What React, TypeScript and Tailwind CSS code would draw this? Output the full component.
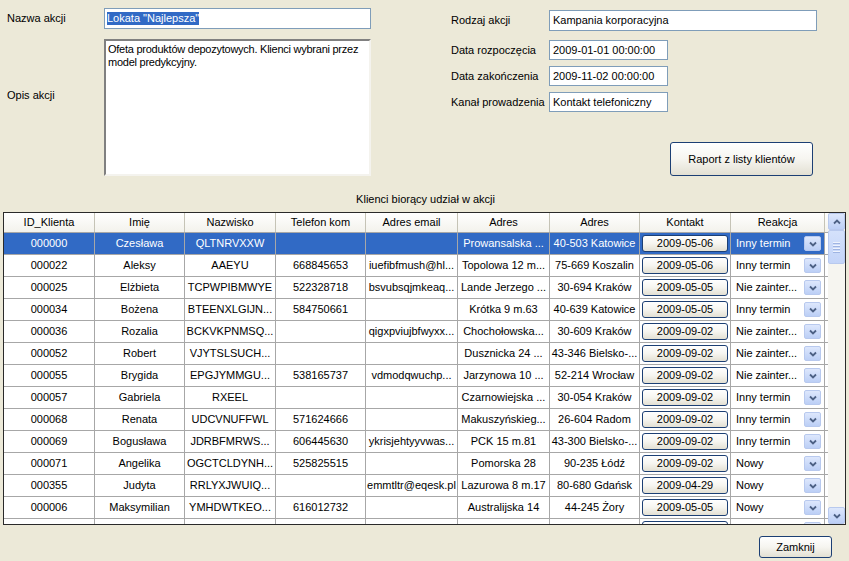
import React from "react";

type Row = {
  id: string;
  imie: string;
  nazwisko: string;
  tel: string;
  email: string;
  adres: string;
  miasto: string;
  kontakt: string;
  reakcja: string;
};

const rows: Row[] = [
  { id: "000000", imie: "Czesława", nazwisko: "QLTNRVXXW", tel: "", email: "", adres: "Prowansalska ...", miasto: "40-503 Katowice", kontakt: "2009-05-06", reakcja: "Inny termin" },
  { id: "000022", imie: "Aleksy", nazwisko: "AAEYU", tel: "668845653", email: "iuefibfmush@hl...", adres: "Topolowa 12 m...", miasto: "75-669 Koszalin", kontakt: "2009-05-06", reakcja: "Inny termin" },
  { id: "000025", imie: "Elżbieta", nazwisko: "TCPWPIBMWYE", tel: "522328718", email: "bsvubsqjmkeaq...", adres: "Lande Jerzego ...", miasto: "30-694 Kraków", kontakt: "2009-05-05", reakcja: "Nie zainter..." },
  { id: "000034", imie: "Bożena", nazwisko: "BTEENXLGIJN...", tel: "584750661", email: "", adres: "Krótka 9 m.63", miasto: "40-639 Katowice", kontakt: "2009-05-05", reakcja: "Inny termin" },
  { id: "000036", imie: "Rozalia", nazwisko: "BCKVKPNMSQ...", tel: "", email: "qigxpviujbfwyxx...", adres: "Chochołowska...", miasto: "30-609 Kraków", kontakt: "2009-09-02", reakcja: "Nie zainter..." },
  { id: "000052", imie: "Robert", nazwisko: "VJYTSLSUCH...", tel: "", email: "", adres: "Dusznicka 24 ...", miasto: "43-346 Bielsko-...", kontakt: "2009-09-02", reakcja: "Nie zainter..." },
  { id: "000055", imie: "Brygida", nazwisko: "EPGJYMMGU...", tel: "538165737", email: "vdmodqwuchp...", adres: "Jarzynowa 10 ...", miasto: "52-214 Wrocław", kontakt: "2009-09-02", reakcja: "Nie zainter..." },
  { id: "000057", imie: "Gabriela", nazwisko: "RXEEL", tel: "", email: "", adres: "Czarnowiejska ...", miasto: "30-054 Kraków", kontakt: "2009-09-02", reakcja: "Inny termin" },
  { id: "000068", imie: "Renata", nazwisko: "UDCVNUFFWL", tel: "571624666", email: "", adres: "Makuszyńskieg...", miasto: "26-604 Radom", kontakt: "2009-09-02", reakcja: "Inny termin" },
  { id: "000069", imie: "Bogusława", nazwisko: "JDRBFMRWS...", tel: "606445630", email: "ykrisjehtyyvwas...", adres: "PCK 15 m.81", miasto: "43-300 Bielsko-...", kontakt: "2009-09-02", reakcja: "Inny termin" },
  { id: "000071", imie: "Angelika", nazwisko: "OGCTCLDYNH...", tel: "525825515", email: "", adres: "Pomorska  28", miasto: "90-235 Łódź", kontakt: "2009-09-02", reakcja: "Nowy" },
  { id: "000355", imie: "Judyta", nazwisko: "RRLYXJWUIQ...", tel: "", email: "emmtltr@eqesk.pl", adres: "Lazurowa 8 m.17", miasto: "80-680 Gdańsk", kontakt: "2009-04-29", reakcja: "Nowy" },
  { id: "000006", imie: "Maksymilian", nazwisko: "YMHDWTKEO...", tel: "616012732", email: "", adres: "Australijska  14", miasto: "44-245 Żory", kontakt: "2009-05-05", reakcja: "Nowy" },
  { id: "", imie: "", nazwisko: "", tel: "", email: "", adres: "", miasto: "", kontakt: "", reakcja: "" },
];

const headers = [
  { label: "ID_Klienta", w: "w-[91px]" },
  { label: "Imię", w: "w-[90px]" },
  { label: "Nazwisko", w: "w-[91px]" },
  { label: "Telefon kom", w: "w-[90px]" },
  { label: "Adres email", w: "w-[92px]" },
  { label: "Adres", w: "w-[92px]" },
  { label: "Adres", w: "w-[90px]" },
  { label: "Kontakt", w: "w-[91px]" },
  { label: "Reakcja", w: "w-[94px]" },
];

const Chevron = ({ up }: { up?: boolean }) => (
  <svg width="8" height="6" viewBox="0 0 8 6">
    <path
      d={up ? "M1 4.5 L4 1.5 L7 4.5" : "M1 1.5 L4 4.5 L7 1.5"}
      fill="none"
      stroke="#4d6185"
      strokeWidth="1.8"
    />
  </svg>
);

const XpButton = ({ className, children }: { className: string; children: React.ReactNode }) => (
  <div
    className={
      "flex items-center justify-center rounded-[3px] border border-[#1c3f74] bg-gradient-to-b from-white via-[#f6f5f0] to-[#e3e0d3] text-black " +
      className
    }
  >
    {children}
  </div>
);

const Cell = ({ w, sel, children, left }: { w: string; sel: boolean; children?: React.ReactNode; left?: boolean }) => (
  <div
    className={`${w} flex h-full shrink-0 items-center overflow-hidden whitespace-nowrap border-r border-[#a7a7a7] px-[3px] ${
      left ? "justify-start" : "justify-center"
    } ${sel ? "bg-[#316ac5] text-white" : ""}`}
  >
    {children}
  </div>
);

const GridRow = ({ r, sel }: { r: Row; sel: boolean }) => (
  <div className="flex h-[22px] shrink-0 border-b border-[#a7a7a7]">
    <Cell w="w-[91px]" sel={sel}>{r.id}</Cell>
    <Cell w="w-[90px]" sel={sel}>{r.imie}</Cell>
    <Cell w="w-[91px]" sel={sel}>{r.nazwisko}</Cell>
    <Cell w="w-[90px]" sel={sel}>{r.tel}</Cell>
    <Cell w="w-[92px]" sel={sel}>{r.email}</Cell>
    <Cell w="w-[92px]" sel={sel}>{r.adres}</Cell>
    <Cell w="w-[90px]" sel={sel}>{r.miasto}</Cell>
    <div className={`flex h-full w-[91px] shrink-0 items-start border-r border-[#a7a7a7] px-[2px] pt-[2px] ${sel ? "bg-[#316ac5]" : ""}`}>
      <XpButton className="h-[17px] w-full">{r.kontakt}</XpButton>
    </div>
    <div className={`flex h-full w-[94px] shrink-0 items-center justify-between border-r border-[#a7a7a7] pl-[5px] pr-[3px] ${sel ? "bg-[#316ac5] text-white" : ""}`}>
      <span className="whitespace-nowrap">{r.reakcja}</span>
      <div className="flex h-[15px] w-[17px] items-center justify-center rounded-[2px] border border-[#b8c9ee] bg-gradient-to-b from-[#dde7fc] to-[#bccff6]">
        <Chevron />
      </div>
    </div>
  </div>
);

const Scrollbar = () => (
  <div className="flex w-[17px] shrink-0 flex-col bg-[#f6f5f0]">
    <div className="flex h-[17px] items-center justify-center rounded-[2px] border border-[#b8c9ee] bg-gradient-to-b from-[#dde7fc] to-[#bccff6]">
      <Chevron up />
    </div>
    <div className="flex h-[34px] flex-col items-center justify-center gap-[2px] rounded-[2px] border border-[#b8c9ee] bg-gradient-to-b from-[#d4e1fb] to-[#c3d4f8]">
      {[0, 1, 2, 3].map((i) => (
        <div key={i} className="h-px w-[7px] bg-[#eef3fd] shadow-[0_1px_0_#9fb4e2]" />
      ))}
    </div>
    <div className="flex-1" />
    <div className="flex h-[17px] items-center justify-center rounded-[2px] border border-[#b8c9ee] bg-gradient-to-b from-[#dde7fc] to-[#bccff6]">
      <Chevron />
    </div>
  </div>
);

export default function App() {
  return (
    <div className="flex h-[561px] w-[849px] flex-col overflow-hidden bg-[#ece9d8] text-[11px] leading-[13px] text-black [font-family:'Liberation_Sans',Arial,sans-serif]">
      {/* form */}
      <div className="flex h-[186px] shrink-0">
        <div className="w-[451px] shrink-0 pl-[7px] pt-[8px]">
          <div className="flex h-[21px] items-center">
            <span className="w-[97px]">Nazwa akcji</span>
            <div className="flex h-[21px] w-[267px] items-center border border-[#7f9db9] bg-white pl-[2px]">
              <span className="bg-[#316ac5] text-white">Lokata "Najlepsza"</span>
            </div>
          </div>
          <div className="mt-[10px] flex">
            <span className="w-[97px] pt-[50px]">Opis akcji</span>
            <div className="h-[137px] w-[267px] overflow-hidden whitespace-nowrap border-2 border-b-[#f4f3ee] border-l-[#808080] border-r-[#f4f3ee] border-t-[#808080] bg-white pl-[2px] pt-[2px] tracking-[-0.25px]">
              Ofeta produktów depozytowych. Klienci wybrani przez
              <br />
              model predykcyjny.
            </div>
          </div>
        </div>

        <div className="flex-1 pt-[10px]">
          <div className="flex h-[21px] items-center">
            <span className="w-[98px]">Rodzaj akcji</span>
            <div className="flex h-[21px] w-[268px] items-center border border-[#7f9db9] bg-white pl-[3px]">Kampania korporacyjna</div>
          </div>
          <div className="mt-[9px] flex h-[20px] items-center">
            <span className="w-[98px]">Data rozpoczęcia</span>
            <div className="flex h-[20px] w-[119px] items-center border border-[#7f9db9] bg-white pl-[3px]">2009-01-01 00:00:00</div>
          </div>
          <div className="mt-[6px] flex h-[20px] items-center">
            <span className="w-[98px]">Data zakończenia</span>
            <div className="flex h-[20px] w-[119px] items-center border border-[#7f9db9] bg-white pl-[3px]">2009-11-02 00:00:00</div>
          </div>
          <div className="mt-[6px] flex h-[20px] items-center">
            <span className="w-[98px]">Kanał prowadzenia</span>
            <div className="flex h-[20px] w-[119px] items-center border border-[#7f9db9] bg-white pl-[3px]">Kontakt telefoniczny</div>
          </div>
          <XpButton className="ml-[219px] mt-[30px] h-[34px] w-[143px]">Raport z listy klientów</XpButton>
        </div>
      </div>

      <div className="flex h-[26px] shrink-0 items-center justify-center pl-[2px]">Klienci biorący udział w akcji</div>

      {/* grid */}
      <div className="ml-[3px] flex h-[313px] w-[843px] shrink-0 border border-[#2a2a2a] bg-white">
        <div className="flex flex-1 flex-col overflow-hidden">
          <div className="flex h-[20px] shrink-0 border-b border-[#a7a7a7] bg-gradient-to-b from-white to-[#f3f2ec]">
            {headers.map((h, i) => (
              <div key={i} className={`${h.w} flex shrink-0 items-center justify-center border-r border-[#c5c3b6]`}>
                {h.label}
              </div>
            ))}
          </div>
          {rows.map((r, i) => (
            <GridRow key={i} r={r} sel={i === 0} />
          ))}
        </div>
        <Scrollbar />
      </div>

      <div className="mt-[11px] flex justify-end pr-[17px]">
        <XpButton className="h-[22px] w-[73px]">Zamknij</XpButton>
      </div>
    </div>
  );
}
